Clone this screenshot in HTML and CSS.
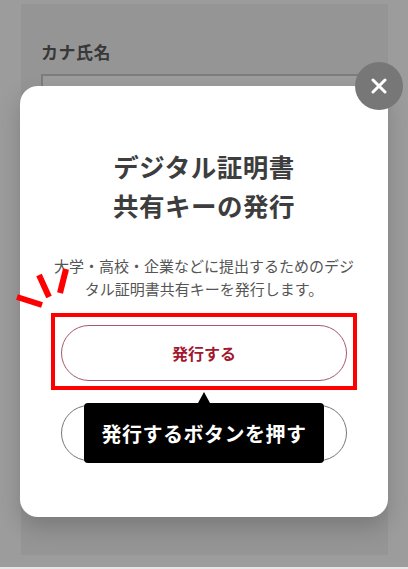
FILE: index.html
```html
<!DOCTYPE html>
<html lang="ja">
<head>
<meta charset="utf-8">
<title>デジタル証明書共有キーの発行</title>
<link rel="stylesheet" href="styles.css">
</head>
<body>
<div class="screen">
  <div class="panel">
    <div class="field-label">カナ氏名</div>
    <div class="field-input"></div>
  </div>
  <div class="bottom-line"></div>

  <div class="modal">
    <h1 class="modal-title">デジタル証明書<br>共有キーの発行</h1>
    <p class="modal-text">大学・高校・企業などに提出するためのデジ<br>タル証明書共有キーを発行します。</p>
    <div class="actions">
      <div class="btn-wrap">
        <button class="btn btn-primary">発行する</button>
        <div class="highlight"></div>
      </div>
      <div class="btn-wrap">
        <button class="btn btn-secondary" aria-label="キャンセル"></button>
        <div class="tooltip">発行するボタンを押す</div>
      </div>
    </div>
  </div>

  <button class="close" aria-label="閉じる">
    <svg width="16" height="16" viewBox="0 0 16 16"><path d="M2 2 L14 14 M14 2 L2 14" stroke="#fff" stroke-width="3" stroke-linecap="round"/></svg>
  </button>

  <svg class="sparks" width="80" height="70" viewBox="0 0 80 70">
    <path d="M17 47 L42 55" stroke="#ff0000" stroke-width="6"/>
    <path d="M39 25 L49 47" stroke="#ff0000" stroke-width="6"/>
    <path d="M66 19 L60 43" stroke="#ff0000" stroke-width="6"/>
  </svg>
</div>
</body>
</html>
```

FILE: styles.css
```css
* { box-sizing: border-box; }
html, body { margin: 0; padding: 0; }
body {
  font-family: "Noto Sans CJK JP", "Noto Sans", sans-serif;
  background: #9c9c9c;
}
.screen {
  position: relative;
  width: 408px;
  height: 569px;
  overflow: hidden;
  background: #9c9c9c;
  padding-top: 4px;
}
.panel {
  margin-left: 21px;
  width: 367px;
  height: 551px;
  background: #959595;
  padding: 38px 20px 0 20px;
}
.field-label {
  font-size: 17px;
  font-weight: 700;
  line-height: 20px;
  color: #383838;
  letter-spacing: 0.5px;
}
.field-input {
  margin-top: 12px;
  height: 44px;
  border: 2px solid #7d7d7d;
  background: #9d9d9d;
}
.bottom-line {
  position: absolute;
  left: 0;
  right: 0;
  bottom: 0;
  height: 2px;
  background: #e6e6e6;
}
.modal {
  position: absolute;
  left: 20px;
  top: 86px;
  width: 368px;
  height: 431px;
  background: #fff;
  border-radius: 18px;
  box-shadow: 0 10px 22px rgba(0, 0, 0, 0.18);
  padding-top: 60px;
  text-align: center;
}
.modal-title {
  margin: 0;
  font-size: 25.5px;
  font-weight: 700;
  line-height: 39px;
  color: #3d3d3d;
  letter-spacing: 0.5px;
}
.modal-text {
  margin: 30px 0 0 0;
  font-size: 15px;
  line-height: 23px;
  color: #555;
  white-space: nowrap;
}
.actions {
  margin-top: 25px;
  padding: 0 41px;
  display: flex;
  flex-direction: column;
  gap: 24px;
}
.btn-wrap {
  position: relative;
}
.btn {
  display: block;
  width: 100%;
  height: 56px;
  border-radius: 28px;
  background: #fff;
  font-family: inherit;
  font-size: 16px;
  font-weight: 700;
  cursor: pointer;
}
.btn-primary {
  border: 1.5px solid #a4596a;
  color: #a3172f;
}
.btn-secondary {
  border: 1px solid #777;
  color: #555;
}
.highlight {
  position: absolute;
  top: -12px;
  left: -10px;
  right: -10px;
  bottom: -9px;
  border: 4px solid #ff0000;
  pointer-events: none;
}
.tooltip {
  position: absolute;
  left: 23px;
  top: -2px;
  width: 240px;
  height: 60px;
  background: #000;
  color: #fff;
  border-radius: 4px;
  font-size: 20px;
  font-weight: 700;
  letter-spacing: 0.5px;
  display: flex;
  align-items: center;
  justify-content: center;
}
.tooltip::before {
  content: "";
  position: absolute;
  left: 114px;
  top: -11px;
  border-left: 6.5px solid transparent;
  border-right: 6.5px solid transparent;
  border-bottom: 11px solid #000;
}
.close {
  position: absolute;
  left: 355px;
  top: 62px;
  width: 48px;
  height: 48px;
  border-radius: 50%;
  border: none;
  background: #777;
  padding: 0;
  display: flex;
  align-items: center;
  justify-content: center;
  cursor: pointer;
}
.sparks {
  position: absolute;
  left: 0;
  top: 250px;
  pointer-events: none;
}
```
